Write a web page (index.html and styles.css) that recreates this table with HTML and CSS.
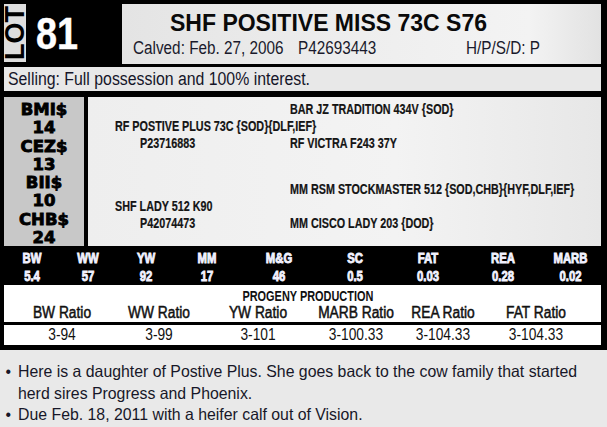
FILE: index.html
```html
<!DOCTYPE html>
<html lang="en">
<head>
<meta charset="utf-8">
<title>Lot 81</title>
<link rel="stylesheet" href="styles.css">
</head>
<body>
<div class="card">
  <header class="top">
    <div class="lot"><span class="lot-text">LOT</span></div>
    <div class="num"><span class="num-text">81</span></div>
    <div class="title-box">
      <h1 class="title">SHF POSITIVE MISS 73C S76</h1>
      <div class="meta">
        <span class="calved">Calved: Feb. 27, 2006</span>
        <span class="reg">P42693443</span>
        <span class="hps">H/P/S/D: P</span>
      </div>
    </div>
  </header>

  <div class="selling"><span class="selling-text">Selling: Full possession and 100% interest.</span></div>

  <div class="mid">
    <div class="indexes">
      <div>BMI$</div><div>14</div>
      <div>CEZ$</div><div>13</div>
      <div>BII$</div><div>10</div>
      <div>CHB$</div><div>24</div>
    </div>
    <div class="pedigree">
      <div class="ped-row"><span class="c3">BAR JZ TRADITION 434V {SOD}</span></div>
      <div class="ped-row"><span class="c1">RF POSTIVE PLUS 73C {SOD}{DLF,IEF}</span></div>
      <div class="ped-row"><span class="c2">P23716883</span><span class="c3">RF VICTRA F243 37Y</span></div>
      <div class="ped-row gap"><span class="c3">MM RSM STOCKMASTER 512 {SOD,CHB}{HYF,DLF,IEF}</span></div>
      <div class="ped-row"><span class="c1">SHF LADY 512 K90</span></div>
      <div class="ped-row"><span class="c2">P42074473</span><span class="c3">MM CISCO LADY 203 {DOD}</span></div>
    </div>
  </div>

  <div class="epd">
    <span>BW</span><span>WW</span><span>YW</span><span>MM</span><span>M&amp;G</span><span>SC</span><span>FAT</span><span>REA</span><span>MARB</span>
    <span>5.4</span><span>57</span><span>92</span><span>17</span><span>46</span><span>0.5</span><span>0.03</span><span>0.28</span><span>0.02</span>
  </div>

  <div class="progeny">
    <div class="prog-title"><span>PROGENY PRODUCTION</span></div>
    <div class="ratio-row labels">
      <span>BW Ratio</span><span>WW Ratio</span><span>YW Ratio</span><span>MARB Ratio</span><span>REA Ratio</span><span>FAT Ratio</span>
    </div>
  </div>
  <div class="ratio-row values">
    <span>3-94</span><span>3-99</span><span>3-101</span><span>3-100.33</span><span>3-104.33</span><span>3-104.33</span>
  </div>
</div>

<ul class="notes">
  <li>Here is a daughter of Postive Plus. She goes back to the cow family that started herd sires Progress and Phoenix.</li>
  <li>Due Feb. 18, 2011 with a heifer calf out of Vision.</li>
</ul>
</body>
</html>
```

FILE: styles.css
```css
* { box-sizing: border-box; }

html, body {
  margin: 0;
  padding: 0;
}

body {
  background: #e9e9e9;
  font-family: "Liberation Sans", Arial, sans-serif;
  color: #111;
  width: 607px;
  overflow: hidden;
}

.card {
  background: #000;
  padding: 4px 6px 5px 4px;
}

/* ---------- header ---------- */
.top {
  display: flex;
  height: 60px;
}

.lot {
  width: 22px;
  flex-shrink: 0;
  height: 58px;
  overflow: hidden;
}

.lot-text {
  display: block;
  writing-mode: vertical-rl;
  transform: rotate(180deg);
  background: #dedede;
  color: #000;
  font-weight: bold;
  font-size: 27px;
  line-height: 22px;
  width: 22px;
  height: 58px;
  text-align: center;
  white-space: nowrap;
}

.num {
  width: 96px;
  flex-shrink: 0;
  padding-left: 10px;
}

.num-text {
  display: inline-block;
  color: #fff;
  font-weight: bold;
  font-size: 45px;
  line-height: 60px;
  transform: scaleX(0.84);
  transform-origin: 0 50%;
  -webkit-text-stroke: 0.4px #fff;
}

.title-box {
  flex: 1;
  min-width: 0;
  background: linear-gradient(90deg, #e4e4e4 0%, #eeeeee 50%, #f3f3f3 85%, #e2e2e2 100%);
  padding: 5px 0 0 11px;
}

.title {
  margin: 0;
  font-weight: bold;
  font-size: 23px;
  line-height: 28px;
  padding-left: 37px;
  color: #0a0a0a;
  white-space: nowrap;
}

.meta {
  display: flex;
  font-size: 18px;
  line-height: 22px;
  color: #1a1a2c;
  white-space: nowrap;
}

.meta span {
  flex-shrink: 0;
  transform: scaleX(0.85);
  transform-origin: 0 50%;
}

.calved { width: 165px; }
.reg { width: 168px; }

/* ---------- selling ---------- */
.selling {
  margin-top: 3px;
  background: #e8e8e8;
  height: 24px;
  line-height: 24px;
  padding-left: 4px;
  white-space: nowrap;
}

.selling-text {
  display: inline-block;
  font-size: 18px;
  color: #151528;
  transform: scaleX(0.88);
  transform-origin: 0 50%;
}

/* ---------- indexes + pedigree ---------- */
.mid {
  margin-top: 6px;
  display: flex;
  gap: 4px;
  height: 149px;
}

.indexes {
  width: 80px;
  flex-shrink: 0;
  background: #c8c8c8;
  text-align: center;
  font-family: "DejaVu Sans", sans-serif;
  font-weight: bold;
  font-size: 15px;
  line-height: 18.3px;
  padding-top: 4px;
  color: #000;
  -webkit-text-stroke: 0.8px #000;
}

.indexes div {
  transform: scaleX(1.1);
}

.pedigree {
  flex: 1;
  min-width: 0;
  background: linear-gradient(90deg, #eeeeee 0%, #f3f3f3 60%, #e7e7e7 100%);
  padding: 4px 0 0 27px;
  font-weight: bold;
  font-size: 14px;
  line-height: 17px;
  color: #141414;
  -webkit-text-stroke: 0.2px #141414;
}

.ped-row {
  display: grid;
  grid-template-columns: 25px 150px 1fr;
  white-space: nowrap;
  height: 17px;
}

.ped-row.gap { margin-top: 29px; }

.ped-row span {
  grid-row: 1;
  transform: scaleX(0.77);
  transform-origin: 0 50%;
}

.c1 { grid-column: 1 / 4; }
.c2 { grid-column: 2; }
.c3 { grid-column: 3; }

/* ---------- EPD strip ---------- */
.epd {
  display: grid;
  grid-template-columns: 56px 56px 60px 62px 82px 70px 76px 74px 1fr;
  color: #f2f2ff;
  font-weight: bold;
  font-size: 14.5px;
  line-height: 18px;
  text-align: center;
  padding-top: 3px;
  height: 39px;
  -webkit-text-stroke: 0.9px #f2f2ff;
}

.epd span {
  transform: scaleX(0.78);
  white-space: nowrap;
}

/* ---------- progeny ---------- */
.progeny {
  background: #fff;
  height: 37px;
  padding-top: 4px;
}

.prog-title {
  text-align: center;
  font-weight: bold;
  font-size: 14px;
  line-height: 15px;
  padding-left: 10px;
}

.prog-title span {
  display: inline-block;
  transform: scaleX(0.78);
}

.ratio-row {
  display: grid;
  grid-template-columns: 96px 98px 100px 96px 78px 108px;
  padding-left: 10px;
  text-align: center;
  white-space: nowrap;
  color: #111;
}

.ratio-row span {
  transform: scaleX(0.86);
}

.ratio-row.labels {
  font-size: 16px;
  line-height: 18px;
  -webkit-text-stroke: 0.5px #111;
}

.ratio-row.values {
  margin-top: 3px;
  background: #fff;
  height: 20px;
  font-size: 16px;
  line-height: 20px;
}

/* ---------- notes ---------- */
.notes {
  list-style: none;
  margin: 0;
  padding: 11px 0 0 18px;
  font-size: 16.5px;
  line-height: 21.5px;
  color: #171728;
}

.notes li {
  position: relative;
  width: 589px;
}

.notes li span,
.notes li {
  transform: scaleX(0.96);
  transform-origin: 0 0;
}

.notes li::before {
  content: "•";
  position: absolute;
  left: -13px;
}
```
